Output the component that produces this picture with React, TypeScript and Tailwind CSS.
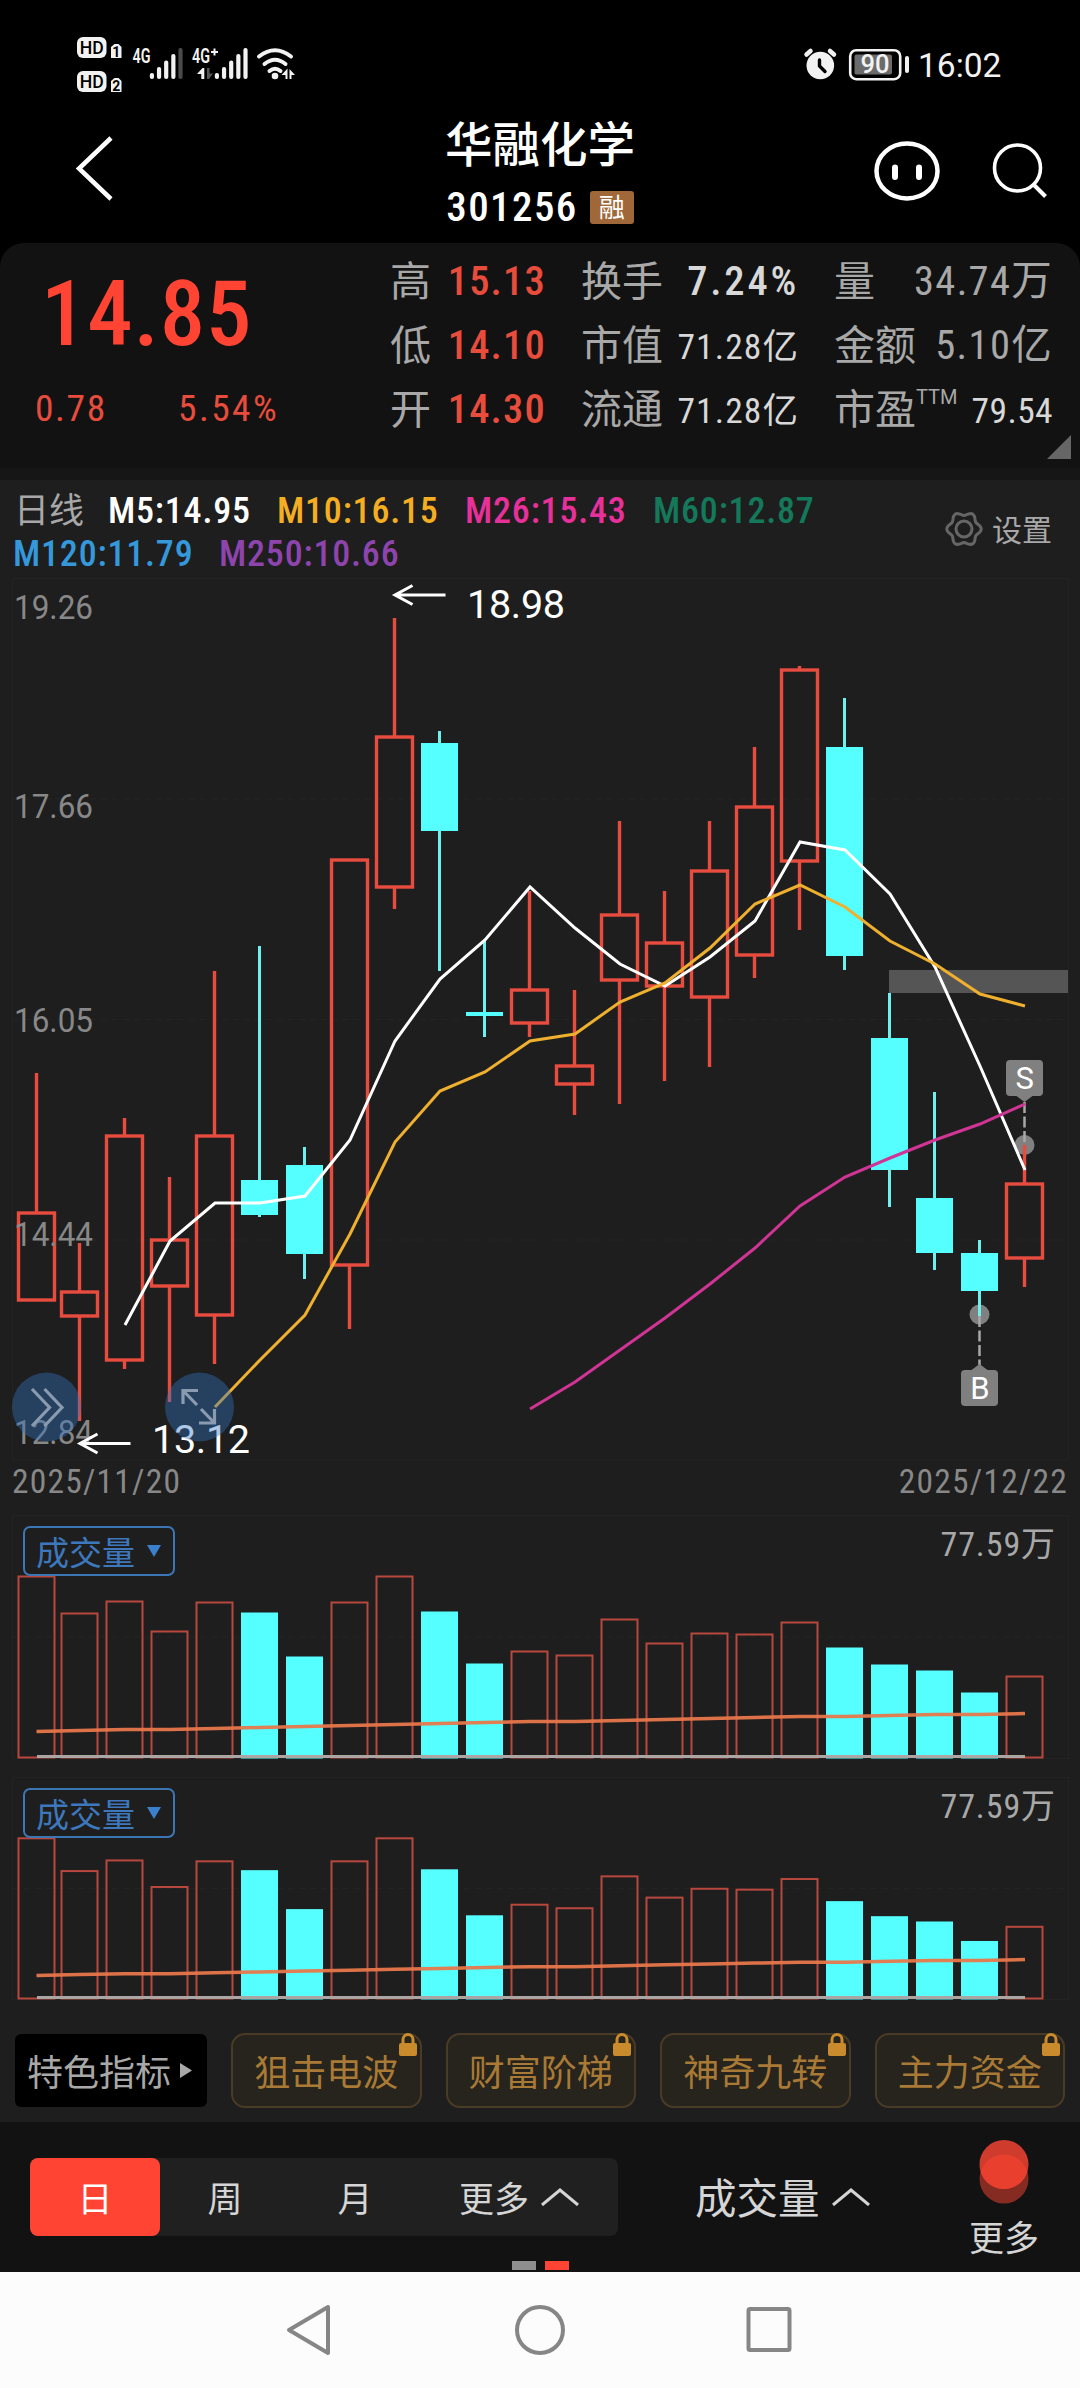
/**
 * Stock detail screen: quote header, daily candles with moving averages,
 * two volume panes and the period switcher
 */

type Candle = {
  high: number;
  top: number;
  bottom: number;
  low: number;
  up: boolean;
  vol: number;
};

const RED = '#e74c3f';
const CYAN = '#55ffff';

// Candle geometry in chart pixels, vol is the bar height in the first volume pane
const CANDLES: Candle[] = [
  { high: 1073, top: 1213, bottom: 1300, low: 1300, up: true, vol: 181 },
  { high: 1243, top: 1292, bottom: 1316, low: 1421, up: true, vol: 144 },
  { high: 1118, top: 1136, bottom: 1360, low: 1369, up: true, vol: 156 },
  { high: 1177, top: 1240, bottom: 1286, low: 1402, up: true, vol: 126 },
  { high: 971, top: 1136, bottom: 1315, low: 1364, up: true, vol: 155 },
  { high: 946, top: 1180, bottom: 1215, low: 1217, up: false, vol: 145 },
  { high: 1147, top: 1165, bottom: 1254, low: 1279, up: false, vol: 101 },
  { high: 860, top: 860, bottom: 1265, low: 1329, up: true, vol: 155 },
  { high: 618, top: 737, bottom: 887, low: 909, up: true, vol: 181 },
  { high: 731, top: 743, bottom: 831, low: 971, up: false, vol: 146 },
  { high: 941, top: 1012, bottom: 1016, low: 1037, up: false, vol: 94 },
  { high: 891, top: 990, bottom: 1023, low: 1037, up: true, vol: 106 },
  { high: 990, top: 1066, bottom: 1084, low: 1115, up: true, vol: 102 },
  { high: 821, top: 915, bottom: 980, low: 1104, up: true, vol: 138 },
  { high: 891, top: 943, bottom: 986, low: 1081, up: true, vol: 114 },
  { high: 821, top: 871, bottom: 997, low: 1067, up: true, vol: 124 },
  { high: 747, top: 807, bottom: 955, low: 978, up: true, vol: 123 },
  { high: 666, top: 670, bottom: 861, low: 930, up: true, vol: 135 },
  { high: 698, top: 747, bottom: 956, low: 970, up: false, vol: 110 },
  { high: 993, top: 1038, bottom: 1170, low: 1207, up: false, vol: 93 },
  { high: 1092, top: 1198, bottom: 1253, low: 1270, up: false, vol: 87 },
  { high: 1240, top: 1253, bottom: 1291, low: 1316, up: false, vol: 65 },
  { high: 1145, top: 1184, bottom: 1258, low: 1287, up: true, vol: 81 },
];

const MA5 = [1325, 1241, 1203, 1203, 1196, 1140, 1041, 979, 940, 887, 928, 964, 986, 957, 921, 842, 850, 894, 967, 1066, 1170];
const MA10 = [1407, 1360, 1315, 1234, 1142, 1091, 1072, 1041, 1034, 1002, 983, 948, 904, 885, 907, 941, 964, 994, 1006];
const MA26 = [1409, 1382, 1350, 1318, 1284, 1248, 1206, 1177, 1158, 1140, 1124, 1104];
const VOL_MA = [26, 27, 28, 28, 29, 30, 31, 32, 33, 34, 35, 36, 36, 37, 38, 39, 40, 41, 41, 42, 43, 43, 44];

const AXIS = [
  { label: '19.26', y: 619 },
  { label: '17.66', y: 818 },
  { label: '16.05', y: 1032 },
  { label: '14.44', y: 1246 },
  { label: '12.84', y: 1444 },
];

const FEATURES = ['狙击电波', '财富阶梯', '神奇九转', '主力资金'];

const centerX = (i: number) => (i === 0 ? 36.5 : 34.5 + 45 * i);

const toPoints = (values: number[], from: number) =>
  values.map((y, i) => `${35 + 45 * (i + from)},${y}`).join(' ');

// Six-lobed gear outline
const GEAR = Array.from({ length: 73 }, (_, i) => {
  const a = (i * 5 * Math.PI) / 180;
  const r = 15.4 + 1.8 * Math.cos(6 * a);
  return `${(19 + r * Math.cos(a)).toFixed(2)},${(19 + r * Math.sin(a)).toFixed(2)}`;
}).join(' ');

const Signal = ({ x, weak = false }: { x: number; weak?: boolean }) => (
  <g>
    {[6, 12, 18.5, 25, 31].map((h, i) => (
      <rect key={h} x={x + i * 7.15} y={79 - h} width="4.2" height={h} rx="2" fill={weak && i === 4 ? '#4a4a4a' : '#f2f2f2'} />
    ))}
  </g>
);

const HdBadge = ({ y, sim }: { y: number; sim: string }) => (
  <g>
    <rect x="77" y={y} width="29.5" height="21" rx="6" fill="#f2f2f2" />
    <text x="91.7" y={y + 17} textAnchor="middle" fontSize="18" fontWeight="500" fill="#000" textLength="24" lengthAdjust="spacingAndGlyphs">HD</text>
    <path d={`M111 ${y + 21}v-11l3.5-3h4l3 3v11z`} fill="#f2f2f2" />
    <text x="116.3" y={y + 19.5} textAnchor="middle" fontSize="14" fontWeight="700" fill="#000">{sim}</text>
  </g>
);

const StatusBar = () => (
  <div className="flex h-[104px] shrink-0 items-start justify-between">
    <svg width="310" height="104" viewBox="0 0 310 104" className="font-[Roboto,sans-serif]">
      <HdBadge y={37} sim="1" />
      <HdBadge y={71} sim="2" />
      <text x="132.5" y="62.5" fontSize="20" fontWeight="600" fill="#f2f2f2" textLength="18" lengthAdjust="spacingAndGlyphs">4G</text>
      <Signal x={149.8} weak />
      <text x="192" y="62.5" fontSize="20" fontWeight="600" fill="#f2f2f2" textLength="18" lengthAdjust="spacingAndGlyphs">4G</text>
      <path d="M214.5 48.5v7M211 52h7" stroke="#f2f2f2" strokeWidth="2" />
      <path d="M197 74l5.5-6h1.8v11h-3v-5z" fill="#f2f2f2" />
      <path d="M207 68v11h2l4-5.5h-3.5v-5.5z" fill="#555" />
      <Signal x={214.8} />
      {/* Wifi */}
      <g fill="none" stroke="#f2f2f2" strokeWidth="4" strokeLinecap="round">
        <path d="M259 56.5q16-12.5 32 0" />
        <path d="M264.5 64q10.5-8.5 21 0" />
        <path d="M269.5 71q5.5-4.5 11 0" />
      </g>
      <circle cx="275" cy="76" r="3.3" fill="#f2f2f2" />
      <path d="M281.5 75l6-6.5v10.5h-2v-4zM289.5 69l5.5 6h-3.5v4h-2z" fill="#f2f2f2" />
    </svg>
    <svg width="280" height="104" viewBox="800 0 280 104" className="font-[Roboto,sans-serif]">
      <circle cx="820.3" cy="65.5" r="13.8" fill="#f2f2f2" />
      <path d="M819.5 60v6l5.5 5.5" fill="none" stroke="#000" strokeWidth="3.4" strokeLinecap="round" />
      <path d="M806.5 54.5l4-3.5M834 54.5l-4-3.5" stroke="#f2f2f2" strokeWidth="4.5" strokeLinecap="round" />
      <rect x="850.2" y="50.2" width="50" height="29" rx="6" fill="none" stroke="#f2f2f2" strokeWidth="2.6" />
      <rect x="854.5" y="54.5" width="37.5" height="20" rx="2" fill="#6b6b6b" />
      <text x="875" y="73" textAnchor="middle" fontSize="25.5" fontWeight="500" fill="#f2f2f2" textLength="29" lengthAdjust="spacingAndGlyphs">90</text>
      <rect x="905" y="56" width="4" height="17" rx="2" fill="#f2f2f2" />
      <text x="918" y="77" fontSize="33.5" fontWeight="400" fill="#f2f2f2">16:02</text>
    </svg>
  </div>
);

const TitleBar = () => (
  <div className="flex h-[139px] shrink-0 justify-between">
    <svg width="300" height="139" viewBox="0 104 300 139" fill="none">
      <path d="M111 138L79 168.5L111 199" stroke="#fff" strokeWidth="4.5" />
    </svg>
    <div className="flex flex-col items-center pt-[17px]">
      <div className="h-[50px] text-[47.5px] leading-[50px] font-medium text-white">华融化学</div>
      <div className="mt-[16px] flex h-[40px] items-center gap-[12px]">
        <span className="text-[41px] leading-none font-medium tracking-[1.4px] text-white [font-stretch:75%]">301256</span>
        <span className="flex h-[33px] w-[44px] items-center justify-center rounded-[3px] bg-[#a06838] pt-px text-[26px] leading-none text-white">融</span>
      </div>
    </div>
    <svg width="300" height="139" viewBox="780 104 300 139" fill="none" stroke="#fff">
      <ellipse cx="907" cy="171" rx="30.5" ry="27.5" strokeWidth="4.5" />
      <path d="M895 167.5v9.5M919 167.5v9.5" strokeWidth="6" strokeLinecap="round" />
      <circle cx="1017.5" cy="168" r="23" strokeWidth="3.6" />
      <path d="M1033.5 184.5L1045.5 196.5" strokeWidth="4" />
    </svg>
  </div>
);

interface QuoteRowProps {
  label: string;
  value: string;
  sup?: string;
  tone: string;
  small?: boolean;
}

const QuoteRow = ({ label, value, sup, tone, small = false }: QuoteRowProps) => (
  <div className="flex h-[64px] items-center justify-between">
    <span className="relative pt-[3px] text-[41px] leading-none text-[#a8a8a8]">
      {label}
      {sup && <sup className="absolute top-0 left-full text-[20px] leading-none">{sup}</sup>}
    </span>
    <span className={`-mr-px leading-none [font-stretch:75%] ${small ? 'pt-[5px] text-[35.5px]' : 'text-[40.5px]'} ${tone}`}>{value}</span>
  </div>
);

const QuotePanel = () => (
  <div className="relative flex h-[225px] shrink-0 rounded-t-[24px] bg-[#121212]">
    <div className="w-[390px] text-[#ff4433]">
      <div className="pt-[26px] pl-[41px] text-[91px] leading-[90px] font-medium tracking-[0.8px] [font-stretch:75%]">14.85</div>
      <div className="flex pt-[25px] pl-[35px] text-[37.5px] leading-[48px] text-[#e74c3c] [font-stretch:75%]">
        <span className="w-[143px] tracking-[1.6px]">0.78</span>
        <span className="tracking-[2.4px]">5.54%</span>
      </div>
    </div>
    <div className="w-[155px] pt-[6px]">
      <QuoteRow label="高" value="15.13" tone="tracking-[1.2px] text-[#e74c3c] font-medium" />
      <QuoteRow label="低" value="14.10" tone="tracking-[1.2px] text-[#e74c3c] font-medium" />
      <QuoteRow label="开" value="14.30" tone="tracking-[1.2px] text-[#e74c3c] font-medium" />
    </div>
    <div className="ml-[36px] w-[217px] pt-[6px]">
      <QuoteRow label="换手" value="7.24%" tone="tracking-[2.8px] text-[#d8d8d8] font-medium" />
      <QuoteRow label="市值" value="71.28亿" tone="tracking-[1.1px] text-[#d8d8d8]" small />
      <QuoteRow label="流通" value="71.28亿" tone="tracking-[1.1px] text-[#d8d8d8]" small />
    </div>
    <div className="ml-[36px] w-[218px] pt-[6px]">
      <QuoteRow label="量" value="34.74万" tone="tracking-[1.3px] text-[#a8a8a8]" />
      <QuoteRow label="金额" value="5.10亿" tone="tracking-[1.3px] text-[#a8a8a8]" />
      <QuoteRow label="市盈" value="79.54" sup="TTM" tone="tracking-[0.4px] text-[#d8d8d8]" small />
    </div>
    <svg className="absolute right-[9px] bottom-[9px]" width="24" height="24">
      <path d="M24 0v24H0z" fill="#666" />
    </svg>
  </div>
);

const Legend = () => (
  <div className="flex h-[98px] shrink-0 justify-between">
    <div className="pt-[9px] pl-[14px] text-[36px] font-medium tracking-[0.8px] [font-stretch:75%]">
      <div className="flex h-[43px] items-center leading-none">
        <span className="w-[94px] pt-[2px] text-[35px] font-normal tracking-normal text-[#a8a8a8]">日线</span>
        <span className="w-[169px] text-white">M5:14.95</span>
        <span className="w-[188px] text-[#f5ae22]">M10:16.15</span>
        <span className="w-[188px] text-[#e8309a]">M26:15.43</span>
        <span className="text-[#14795a]">M60:12.87</span>
      </div>
      <div className="-ml-px flex h-[43px] items-center leading-none">
        <span className="w-[206px] text-[#3498db]">M120:11.79</span>
        <span className="text-[#8e44ad]">M250:10.66</span>
      </div>
    </div>
    <div className="flex h-[98px] items-center gap-[9px] pr-[28px] text-[30px] leading-none text-[#a8a8a8]">
      <svg width="38" height="38" fill="none" stroke="#666" strokeWidth="3">
        <polygon points={GEAR} />
        <circle cx="19" cy="19" r="8" />
      </svg>
      <span className="pt-[3px]">设置</span>
    </div>
  </div>
);

const CandleBar = ({ candle, x }: { candle: Candle; x: number }) => {
  const { high, top, bottom, low, up } = candle;
  if (up) {
    return (
      <g stroke={RED} strokeWidth="3.4" fill="none">
        <path d={`M${x} ${high}V${top}M${x} ${bottom}V${low}`} />
        <rect x={x - 18} y={top} width="36" height={bottom - top} />
      </g>
    );
  }
  return (
    <g>
      <path d={`M${x} ${high}V${low}`} stroke="#6ff0ee" strokeWidth="3" />
      <rect x={x - 18.5} y={top} width="37" height={bottom - top} fill={CYAN} />
    </g>
  );
};

const KLineChart = () => (
  <svg width="1080" height="884" viewBox="0 578 1080 884" className="shrink-0 font-[Roboto,sans-serif]" fill="none">
    <rect x="12.5" y="578.5" width="1056" height="881.5" stroke="#232323" />
    <path d="M13 799H1068M13 1019.5H1068M13 1240H1068" stroke="#242424" strokeDasharray="6 5" />
    <rect x="889" y="970" width="179" height="23" fill="#555" />

    {/* Buy and sell anchors sit behind the wicks */}
    <circle cx="1024.5" cy="1145" r="10" fill="#808080" />
    <circle cx="979.5" cy="1314.5" r="10" fill="#808080" />
    <path d="M1024.5 1102V1145M979.5 1316V1365" stroke="#a8a8a8" strokeWidth="2.5" strokeDasharray="11 3.5" />

    {CANDLES.map((c, i) => (
      <CandleBar key={i} candle={c} x={centerX(i)} />
    ))}

    <g strokeWidth="3">
      <polyline points={toPoints(MA5, 2)} stroke="#fff" />
      <polyline points={toPoints(MA10, 4)} stroke="#efb02f" />
      <polyline points={toPoints(MA26, 11)} stroke="#d03595" />
    </g>

    <g fill="#888" fontSize="34">
      {AXIS.map((a) => (
        <text key={a.label} x="14" y={a.y} textLength="79" lengthAdjust="spacingAndGlyphs">{a.label}</text>
      ))}
    </g>

    {/* Period extremes */}
    <g stroke="#fff" strokeWidth="3">
      <path d="M445.5 595H395M412.5 585.5L395 595L412.5 604.5" />
      <path d="M130.5 1443.5H80M97.5 1434L80 1443.5L97.5 1453" />
    </g>
    <text x="467" y="618" fontSize="39.5" fill="#fff" textLength="98" lengthAdjust="spacing">18.98</text>
    <text x="152" y="1453" fontSize="39.5" fill="#fff" textLength="98" lengthAdjust="spacing">13.12</text>

    {/* Trade flags */}
    <path d="M1016.5 1096h16l-8 6z" fill="#808080" />
    <rect x="1006" y="1060" width="37" height="36" rx="4" fill="#808080" />
    <text x="1024.8" y="1089" textAnchor="middle" fontSize="31" fill="#fff">S</text>
    <path d="M971.5 1370h16l-8-6z" fill="#808080" />
    <rect x="961" y="1370" width="37" height="36" rx="4" fill="#808080" />
    <text x="979.8" y="1399" textAnchor="middle" fontSize="31" fill="#fff">B</text>

    {/* Floating controls */}
    <g fill="#3273c0" fillOpacity="0.4">
      <circle cx="46.5" cy="1407" r="34.5" />
      <circle cx="199.5" cy="1407" r="34.5" />
    </g>
    <g stroke="#8a9bb0" strokeWidth="3.2">
      <path d="M32 1389L49.5 1407.5L32 1426M44.5 1389L62 1407.5L44.5 1426" />
      <path d="M198 1390.5H183V1404M183 1390.5L197 1405M199 1423H214.5V1409M214.5 1423L201 1409" />
    </g>
  </svg>
);

const VolumePane = ({ height, scale }: { height: number; scale: number }) => {
  const base = height - 1.5;
  const line = VOL_MA.map((v, i) => `${i === 0 ? 36.5 : 35 + 45 * i},${base - v * scale}`).join(' ');
  return (
    <div className="relative shrink-0">
      <svg width="1080" height={height} fill="none">
        <rect x="12.5" y="0.5" width="1056" height={height - 1} stroke="#232323" />
        <path d={`M13 ${height / 2}H1068`} stroke="#242424" strokeDasharray="6 5" />
        {CANDLES.map((c, i) => {
          const h = c.vol * scale;
          const x = centerX(i);
          return c.up ? (
            <rect key={i} x={x - 18} y={base - h} width="36" height={h} stroke="#b8483e" strokeWidth="2" />
          ) : (
            <rect key={i} x={x - 18.5} y={base - h} width="37" height={h + 1} fill={CYAN} />
          );
        })}
        <path d={`M37 ${base - 1}H1025`} stroke="#aba5a3" strokeWidth="3" />
        <polyline points={line} stroke="#e8774b" strokeOpacity="0.95" strokeWidth="3.5" />
      </svg>
      <button className="absolute top-[11px] left-[23px] flex h-[50px] w-[152px] items-center rounded-[7px] border-2 border-[#3d76b5] pl-[11px] text-[33px] leading-none text-[#3d78bd]">
        <span className="pt-[4px]">成交量</span>
        <svg className="ml-[12px]" width="14" height="12">
          <path d="M0 0h14L7 12z" fill="#3a80cc" />
        </svg>
      </button>
      <span className="absolute top-[8px] right-[24px] flex h-[42px] items-center text-[34px] leading-none tracking-[0.9px] text-[#a8a8a8] [font-stretch:75%]">77.59万</span>
    </div>
  );
};

const FeatureRow = () => (
  <div className="mt-[33px] flex h-[75px] shrink-0 items-center pl-[15px] text-[36px] leading-none">
    <div className="mr-[24px] flex h-[73px] w-[192px] items-center rounded-[6px] bg-black pl-[12px] text-[#a8a8a8]">
      <span className="pt-[7px]">特色指标</span>
      <svg className="ml-[9px]" width="12" height="15">
        <path d="M0 0v15l12-7.5z" fill="#a8a8a8" />
      </svg>
    </div>
    <div className="flex gap-[24px]">
      {FEATURES.map((name) => (
        <div key={name} className="relative flex h-[75px] w-[190.5px] items-center justify-center rounded-[14px] border-2 border-[#4a3b26] bg-[#27231d] pt-[7px] text-[#a87a35]">
          {name}
          <svg className="absolute -top-[2px] right-[3px]" width="18" height="24" fill="none">
            <rect x="0" y="10" width="18" height="13" rx="2" fill="#c98b2b" />
            <path d="M4 11V6.5a5 5 0 0 1 10 0V11" stroke="#c98b2b" strokeWidth="3" />
          </svg>
        </div>
      ))}
    </div>
  </div>
);

const CaretUp = () => (
  <svg width="38" height="18" fill="none">
    <path d="M1 17L19 2L37 17" stroke="#d5d5d5" strokeWidth="3" />
  </svg>
);

const BottomBar = () => (
  <div className="mt-[14px] flex h-[150px] shrink-0 flex-col bg-[#121212]">
    <div className="flex h-[139px] text-[35px] leading-none text-[#d5d5d5]">
      <div className="mt-[36px] ml-[30px] flex h-[78px] w-[588px] items-center rounded-[8px] bg-[#202020]">
        <div className="flex h-full w-[130px] items-center justify-center rounded-[8px] bg-[#ff4433] pt-[6px] text-white">日</div>
        <div className="w-[130px] pt-[6px] text-center">周</div>
        <div className="w-[130px] pt-[6px] text-center">月</div>
        <div className="flex flex-1 items-center justify-center gap-[12px]">
          <span className="pt-[6px]">更多</span>
          <CaretUp />
        </div>
      </div>
      <div className="mt-[36px] ml-[77px] flex h-[78px] items-center gap-[12px] text-[41.5px]">
        <span className="pt-[5px]">成交量</span>
        <CaretUp />
      </div>
      <div className="ml-auto flex w-[152px] flex-col items-center pt-[17px]">
        <svg width="52" height="65">
          <circle cx="26" cy="40" r="24.5" fill="#852b22" />
          <circle cx="26" cy="25.5" r="24.5" fill="#cf3c2d" />
          <path d="M2.6 32.75a24.5 24.5 0 0 1 46.8 0a24.5 24.5 0 0 1-46.8 0z" fill="#e83f2e" />
        </svg>
        <span className="mt-[18px]">更多</span>
      </div>
    </div>
    <div className="flex justify-center gap-[9px]">
      <span className="h-[9px] w-[24px] bg-[#8e8e8e]" />
      <span className="h-[9px] w-[24px] bg-[#ff4433]" />
    </div>
  </div>
);

const SystemNav = () => (
  <div className="flex flex-1 items-start justify-center bg-[#fcfcfc]">
    <svg width="1080" height="116" fill="none" stroke="#868686" strokeWidth="4" strokeLinejoin="round">
      <path d="M328 35V81L289 58z" />
      <circle cx="540" cy="58" r="23" />
      <rect x="748.5" y="37" width="41" height="41" rx="1.5" />
    </svg>
  </div>
);

const App = () => (
  <div className="flex h-[2388px] w-[1080px] flex-col overflow-hidden bg-[#1e1e1e] font-[Roboto,'Noto_Sans_CJK_SC',sans-serif]">
    <div className="flex shrink-0 flex-col bg-black">
      <StatusBar />
      <TitleBar />
      <QuotePanel />
    </div>
    <div className="h-[12px] shrink-0 bg-[#161616]" />
    <Legend />
    <KLineChart />
    <div className="flex h-[53px] shrink-0 items-start justify-between px-[12px] text-[33.5px] leading-[40px] tracking-[1.2px] text-[#888] [font-stretch:75%]">
      <span>2025/11/20</span>
      <span>2025/12/22</span>
    </div>
    <VolumePane height={244} scale={1} />
    <div className="h-[18px] shrink-0" />
    <VolumePane height={223} scale={0.885} />
    <FeatureRow />
    <BottomBar />
    <SystemNav />
  </div>
);

export default App;
